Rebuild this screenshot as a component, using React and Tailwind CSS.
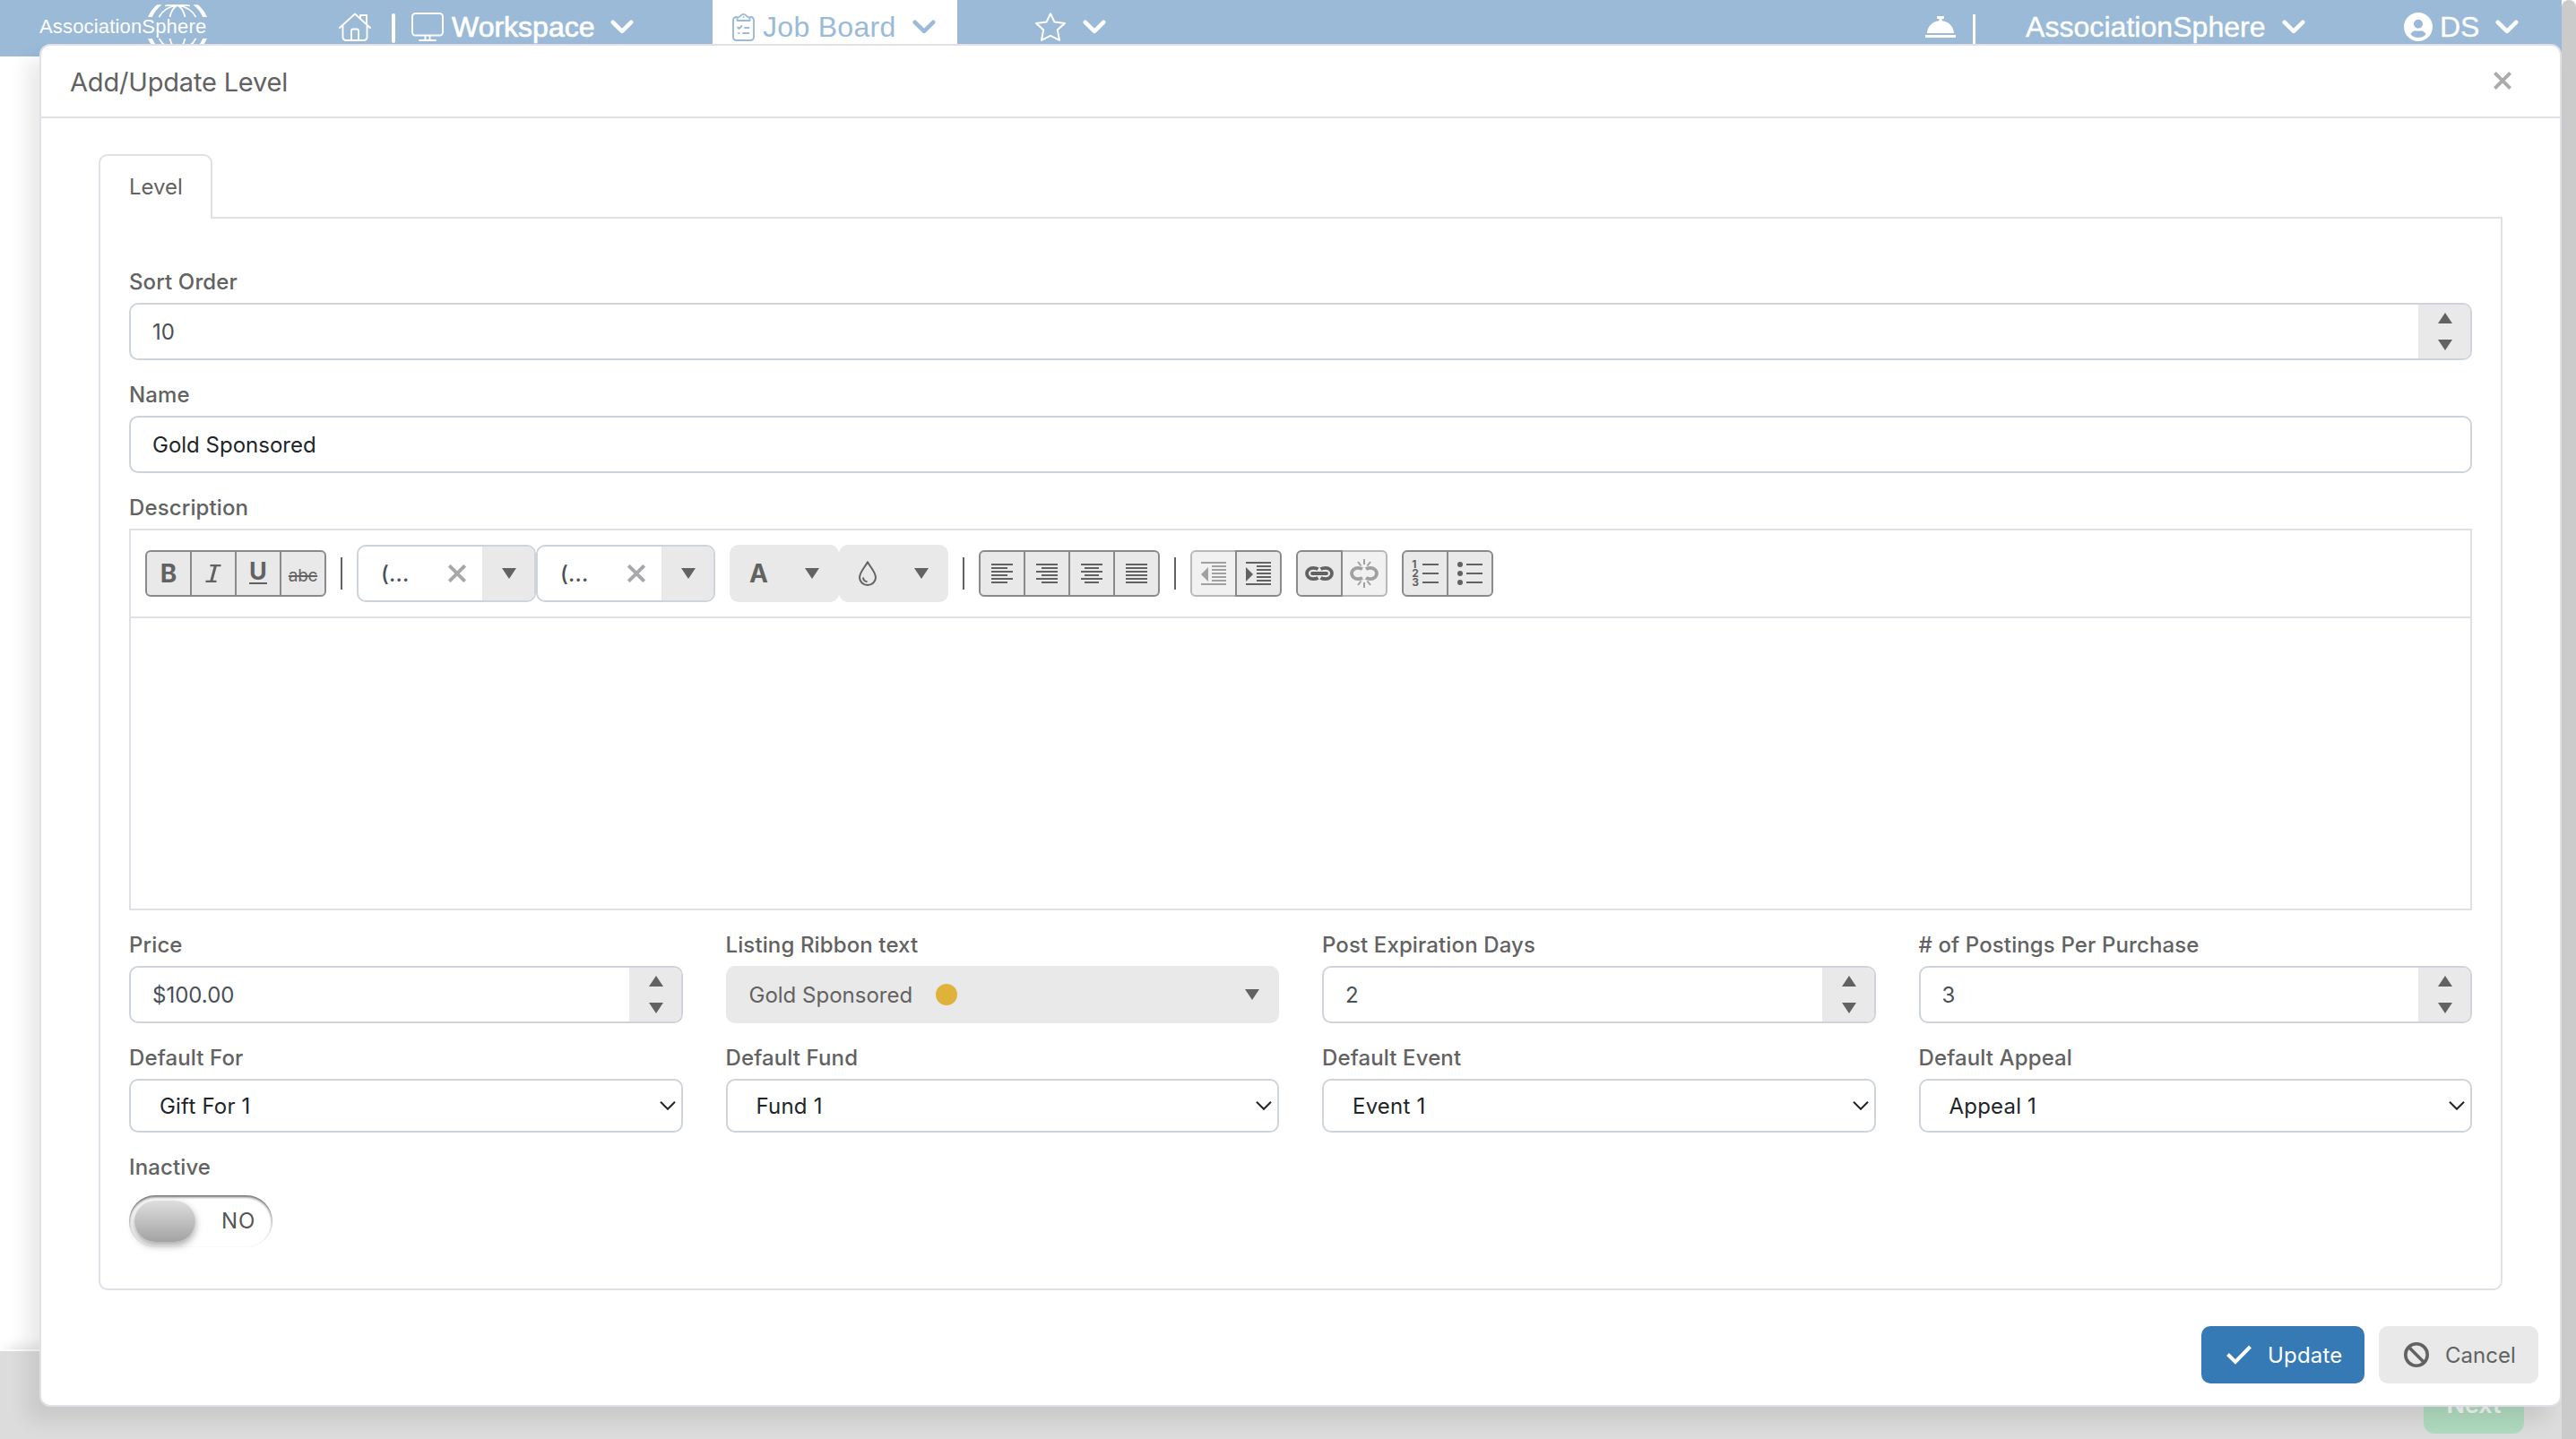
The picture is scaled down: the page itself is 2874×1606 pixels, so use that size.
import React from "react";

function Chevron({ className = "" }) {
  return (
    <svg viewBox="0 0 26 16" className={`h-4 w-[26px] shrink-0 ${className}`} fill="none" stroke="currentColor" strokeWidth="4.6" strokeLinecap="round" strokeLinejoin="round">
      <path d="M2.8 2.8 13 12.8 23.2 2.8" />
    </svg>
  );
}

function TriangleDown({ className = "" }) {
  return (
    <svg viewBox="0 0 16 12" className={`h-3 w-4 shrink-0 fill-[#626262] ${className}`}>
      <path d="M0 0h16L8 12z" />
    </svg>
  );
}

function TriangleUp() {
  return (
    <svg viewBox="0 0 16 12" className="h-3 w-4 shrink-0 fill-[#626262]">
      <path d="M0 12h16L8 0z" />
    </svg>
  );
}

function Logo() {
  return (
    <div className="relative ml-11 h-[60px] w-[188px] shrink-0 text-white">
      <svg viewBox="0 0 66 52" className="absolute top-[5px] left-[121px] h-[52px] w-[66px]" fill="none" stroke="currentColor" strokeWidth="1.7">
        <defs>
          <g id="cap">
            <path d="M0 14Q3.5 6 10 .3h5.500Q8 6.500 4.800 14zM66 14Q62.500 6 56 .3h-5.500Q58 6.500 61.200 14z" fill="currentColor" stroke="none" />
            <path d="M12.500 14Q18 3 33 .9Q48 3 53.500 14M24.500 14Q27 3.500 33 .9Q39 3.500 41.500 14M19 1.500Q33-.6 47 1.500" />
          </g>
        </defs>
        <use href="#cap" />
        <use href="#cap" transform="matrix(1 0 0 -1 0 52)" />
      </svg>
      <span className="absolute top-[17px] left-0 font-['Liberation_Sans',sans-serif] text-[22px] leading-[25px] tracking-[0.17px] whitespace-nowrap">AssociationSphere</span>
    </div>
  );
}

function Navbar() {
  return (
    <header className="flex h-[63px] items-start bg-[#9abad8] font-['Liberation_Sans',sans-serif] text-[32px] leading-none whitespace-nowrap text-white">
      <div className="flex h-[60px] items-center">
        <Logo />
        <svg viewBox="0 0 36 32" className="ml-[146px] h-8 w-9 shrink-0" fill="none" stroke="currentColor" strokeWidth="1.9" strokeLinecap="round" strokeLinejoin="round">
          <path d="M1 17 18 1.500 35 17M4.500 14v13.500a3.500 3.500 0 0 0 3.500 3.500h20a3.500 3.500 0 0 0 3.500-3.500V14M14 31V20.500a2 2 0 0 1 2-2h4a2 2 0 0 1 2 2V31M24 6.500V3h7v10" />
        </svg>
        <span className="mt-[3px] ml-[23px] h-[33px] w-1 shrink-0 rounded-sm bg-white" />
        <svg viewBox="0 0 36 32" className="ml-[18px] h-8 w-9 shrink-0" fill="none" stroke="currentColor" strokeWidth="1.900" strokeLinecap="round">
          <rect x="1" y="1" width="34" height="24.500" rx="3.500" />
          <path d="M15.500 26v4.500M20.500 26v4.500M9 31h18" />
        </svg>
        <span className="ml-[9px] w-40 shrink-0 [-webkit-text-stroke:0.7px]">Workspace</span>
        <Chevron className="ml-[17px]" />
      </div>
      <div className="ml-[88px] flex h-[63px] w-[273px] shrink-0 items-start bg-white text-[#9abad8]">
        <div className="flex h-[60px] items-center">
          <svg viewBox="0 0 25 32" className="ml-[22px] h-8 w-[25px] shrink-0" fill="none" stroke="currentColor" strokeWidth="1.900" strokeLinecap="round" strokeLinejoin="round">
            <path d="M5 5H4.500A3.500 3.500 0 0 0 1 8.500v19A3.500 3.500 0 0 0 4.500 31h16a3.500 3.500 0 0 0 3.500-3.500v-19A3.500 3.500 0 0 0 20.500 5H20" />
            <path d="M5.500 9V6l3.500-2a4 4 0 0 1 7 0l3.500 2v3zM12.500 5v.2M6 16.500l1.500 1.500 3-3M14 17h4.500M7 23h.5M12 23h6.500" strokeWidth="1.800" />
          </svg>
          <span className="ml-[9px] w-[150px] shrink-0 tracking-[0.3px]">Job Board</span>
          <Chevron className="ml-[17px]" />
        </div>
      </div>
      <div className="flex h-[60px] items-center">
        <svg viewBox="0 0 34 32" className="ml-[87px] h-8 w-[34px] shrink-0" fill="none" stroke="currentColor" strokeWidth="2" strokeLinejoin="round">
          <path d="M17 1.200 21.500 10.600 33 11.900 24.800 19.300 27 30.800 17 25.800 7 30.800 9.200 19.300 1 11.900 12.500 10.600z" />
        </svg>
        <Chevron className="ml-[19px]" />
        <svg viewBox="0 0 34 24" className="ml-[914px] h-6 w-[34px] shrink-0" fill="currentColor">
          <path d="M13 0h8v3h-2.300v2.200C26.500 6 31.500 11.500 32 19H2C2.500 11.500 7.500 6 15.300 5.200V3H13zM0 21h34v3H0z" />
        </svg>
        <span className="mt-[5px] ml-[19px] h-[33px] w-[3px] shrink-0 bg-white" />
        <span className="ml-[56px] w-[268px] shrink-0 tracking-[0.05px] [-webkit-text-stroke:0.4px]">AssociationSphere</span>
        <Chevron className="ml-[18px]" />
        <svg viewBox="0 0 32 32" className="ml-[110px] h-8 w-8 shrink-0">
          <path fill="currentColor" fillRule="evenodd" d="M16 0a16 16 0 1 0 0 32 16 16 0 0 0 0-32zM16 7.800a5 5 0 1 1 0 10 5 5 0 0 1 0-10zM7.500 24.500c.8-2.700 3-4.300 5.500-4.300 1.200.5 4.800.5 6 0 2.500 0 4.700 1.600 5.500 4.300-4.500 4.700-12.500 4.700-17 0z" />
        </svg>
        <span className="ml-[8px] w-[46px] shrink-0 [-webkit-text-stroke:0.3px]">DS</span>
        <Chevron className="ml-[16px]" />
      </div>
    </header>
  );
}

function Field({ label, children }) {
  return (
    <div className="flex flex-col">
      <label className="mb-[6px] h-9 leading-[38px] font-medium tracking-[0.12px] text-[#626262]">{label}</label>
      {children}
    </div>
  );
}

function Spinner({ value }) {
  return (
    <div className="flex h-16 overflow-hidden rounded-[10px] border-2 border-[#ced4da]">
      <div className="flex flex-1 items-center pt-[2px] pl-6 text-[#495057]">{value}</div>
      <div className="flex w-[58px] flex-col items-center justify-center gap-[18px] bg-[#e9e9e9] pl-[2px]">
        <TriangleUp />
        <TriangleDown />
      </div>
    </div>
  );
}

function Select({ value }) {
  return (
    <div className="flex h-[60px] items-center justify-between rounded-[10px] border-2 border-[#ced4da] pr-[6px] pl-8 text-[#212529]">
      <span className="pt-[2px] tracking-[0.2px]">{value}</span>
      <svg viewBox="0 0 18 10" className="h-[10px] w-[18px]" fill="none" stroke="currentColor" strokeWidth="2">
        <path d="M1 .8 9 8.800 17 .8" />
      </svg>
    </div>
  );
}

const BUTTON = "-ml-[2px] flex h-[52px] w-[52px] shrink-0 items-center justify-center border-2 border-[#8a8a8a] bg-[#e9e9e9] text-[#626262] first:ml-0 first:rounded-l-md last:rounded-r-md";

function ToolButton({ disabled, children }) {
  return <div className={disabled ? `${BUTTON} opacity-60` : `${BUTTON} relative`}>{children}</div>;
}

function Separator() {
  return <span className="mx-4 h-9 w-[2px] shrink-0 bg-[#626262]" />;
}

function Combo() {
  return (
    <div className="flex h-16 w-[200px] shrink-0 overflow-hidden rounded-[10px] border-2 border-[#ced4da] text-[#495057]">
      <div className="flex flex-1 items-center justify-between pr-[18px] pl-[25px]">
        <span className="pt-[2px] font-medium tracking-[0.2px]">(...</span>
        <svg viewBox="0 0 20 20" className="h-5 w-5" stroke="#a6a8ab" strokeWidth="4">
          <path d="M1.300 1.300l17.400 17.400M18.700 1.300 1.300 18.700" />
        </svg>
      </div>
      <div className="flex w-[58px] items-center justify-center bg-[#e9e9e9] pl-[2px]">
        <TriangleDown />
      </div>
    </div>
  );
}

function ColorButton({ children }) {
  return (
    <div className="flex h-16 w-[122px] shrink-0 items-center justify-between rounded-[10px] bg-[#e9e9e9] pr-[22px] pl-[22px] text-[#626262]">
      {children}
      <TriangleDown />
    </div>
  );
}

function Align({ lines }) {
  return (
    <svg viewBox="0 0 24 22" className="h-[22px] w-6 fill-current">
      {lines.map(([x, w], i) => (
        <rect key={i} x={x} y={i * 4} width={w} height="2" />
      ))}
    </svg>
  );
}

function IndentIcon({ arrow }) {
  return (
    <svg viewBox="0 0 28 26" className="h-[26px] w-7 fill-current">
      <path d="M0 0h28v2H0zM12 4h16v2H12zM12 8h16v2H12zM12 12h16v2H12zM12 16h16v2H12zM12 20h16v2H12zM0 24h28v2H0z" />
      <path d={arrow} />
    </svg>
  );
}

const alternate = (x, w) => [0, 1, 2, 3, 4, 5].map((i) => (i % 2 ? [x, w] : [0, 24]));

function Toolbar() {
  return (
    <div className="flex h-24 items-center border-b-2 border-[#e0e0e6] pl-4 box-content">
      <div className="flex">
        <ToolButton><span className="text-[28px] leading-none font-bold">B</span></ToolButton>
        <ToolButton>
          <svg viewBox="0 0 18 20" className="h-5 w-[18px]" fill="none" stroke="currentColor" strokeWidth="2.300">
            <path d="M5.500 1.200H17.500M.5 18.800H12.500" />
            <path d="M11.500 1 6.700 19" strokeWidth="3" />
          </svg>
        </ToolButton>
        <ToolButton>
          <span className="mb-[2px] border-b-2 border-[#626262] text-[27px] leading-[23px] font-bold">
            <span className="relative -top-px">U</span>
          </span>
        </ToolButton>
        <ToolButton><span className="mt-[5px] text-[19px] leading-none tracking-[-0.3px] line-through decoration-2">abc</span></ToolButton>
      </div>
      <Separator />
      <Combo />
      <Combo />
      <div className="ml-4 flex">
        <ColorButton><span className="text-[28px] leading-none font-bold">A</span></ColorButton>
        <ColorButton>
          <svg viewBox="0 0 20 28" className="h-7 w-5" fill="none" stroke="currentColor" strokeWidth="2" strokeLinejoin="round">
            <path d="M10 1.200C7 7 1 12.500 1 18.500a9 8.500 0 0 0 18 0C19 12.500 13 7 10 1.200z" />
            <path d="M5 18.500c.2 2.700 2 4.400 4.600 4.700" />
          </svg>
        </ColorButton>
      </div>
      <Separator />
      <div className="flex">
        <ToolButton><Align lines={alternate(0, 18)} /></ToolButton>
        <ToolButton><Align lines={alternate(6, 18)} /></ToolButton>
        <ToolButton><Align lines={alternate(4, 16)} /></ToolButton>
        <ToolButton><Align lines={alternate(0, 24)} /></ToolButton>
      </div>
      <Separator />
      <div className="flex">
        <ToolButton disabled><IndentIcon arrow="M8 6v16L0 14z" /></ToolButton>
        <ToolButton><IndentIcon arrow="M0 6v16l8-8z" /></ToolButton>
      </div>
      <div className="ml-4 flex">
        <ToolButton>
          <svg viewBox="0 0 32 16" className="h-4 w-8 shrink-0" fill="none" stroke="currentColor" strokeWidth="3.800">
            <path d="M14.500 3.200C13 2.200 11.500 1.900 9 1.900a7 6.100 0 0 0 0 12.200c2.500 0 4-.3 5.500-1.300M17.500 3.200C19 2.200 20.500 1.900 23 1.900a7 6.100 0 0 1 0 12.200c-2.500 0-4-.3-5.500-1.300" />
            <path d="M8 8h16" strokeLinecap="round" />
          </svg>
        </ToolButton>
        <ToolButton disabled>
          <svg viewBox="0 0 32 32" className="h-8 w-8 shrink-0" fill="none" stroke="currentColor" strokeWidth="3.800">
            <path d="M14 11.200C12.500 10.200 11 9.900 9 9.900a7 6.100 0 0 0 0 12.200c2 0 3.500-.3 5-1.300M18 11.200c1.500-1 3-1.300 5-1.300a7 6.100 0 0 1 0 12.200c-2 0-3.500-.3-5-1.300" />
            <path d="M16 0v6M16 26v6M9 3l3.500 4.500M23 3l-3.500 4.500M9 29l3.500-4.500M23 29l-3.500-4.500" strokeWidth="2" />
          </svg>
        </ToolButton>
      </div>
      <div className="ml-4 flex">
        <ToolButton>
          <div className="flex items-center gap-[4px]">
            <div className="flex flex-col text-[12px] leading-[10px] font-bold">
              <span>1</span>
              <span>2</span>
              <span>3</span>
            </div>
            <div className="flex flex-col gap-2">
              <span className="h-[2px] w-[18px] bg-[#626262]" />
              <span className="h-[2px] w-[18px] bg-[#626262]" />
              <span className="h-[2px] w-[18px] bg-[#626262]" />
            </div>
          </div>
        </ToolButton>
        <ToolButton>
          <svg viewBox="0 0 28 26" className="h-[26px] w-7 fill-current">
            <circle cx="3" cy="3" r="3" />
            <circle cx="3" cy="13" r="3" />
            <circle cx="3" cy="23" r="3" />
            <path d="M10 2h18v2H10zM10 12h18v2H10zM10 22h18v2H10z" />
          </svg>
        </ToolButton>
      </div>
    </div>
  );
}

function Switch() {
  return (
    <div className="mt-2 flex h-[58px] w-40 items-center rounded-full pl-[6px] text-[#555] shadow-[inset_0_2px_3px_0_rgba(0,0,0,0.6)]">
      <span className="h-[46px] w-[68px] rounded-full bg-gradient-to-b from-[#dedede] to-[#a3a3a3] shadow-[0_4px_8px_rgba(0,0,0,0.35)]" />
      <span className="ml-[29px] tracking-[0.8px]">NO</span>
    </div>
  );
}

function Modal() {
  return (
    <div className="absolute top-[49px] left-11 flex h-[1521px] w-[2814px] flex-col rounded-[12px] border-2 border-[#e0e0e6] bg-white shadow-[-14px_16px_22px_rgba(0,0,0,0.085)]">
      <div className="flex h-[81px] items-center justify-between border-b-2 border-[#e0e0e6] pr-[54px] pl-8 pb-px">
        <h1 className="pt-[2px] text-[29px] leading-none tracking-[-0.18px] text-[#626262]">Add/Update Level</h1>
        <svg viewBox="0 0 20 20" className="h-5 w-5" stroke="#ababab" strokeWidth="4">
          <path d="M1.400 1.400l17.200 17.200M18.600 1.400 1.400 18.600" />
        </svg>
      </div>
      <div className="px-16 pt-10">
        <div className="relative z-10 -mb-[2px] flex h-[72px] w-[127px] items-center rounded-t-[10px] border-2 border-b-0 border-[#e0e0e6] bg-white pl-8 text-[#626262]">Level</div>
        <div className="flex h-[1198px] flex-col gap-5 rounded-b-[10px] border-2 border-[#e0e0e6] px-8 pt-[52px]">
          <Field label="Sort Order"><Spinner value="10" /></Field>
          <Field label="Name">
            <div className="flex h-16 items-center rounded-[10px] border-2 border-[#ced4da] pt-[2px] pl-6 text-[#212529]">Gold Sponsored</div>
          </Field>
          <Field label="Description">
            <div className="h-[426px] border-2 border-[#e0e0e6]">
              <Toolbar />
            </div>
          </Field>
          <div className="grid grid-cols-4 gap-x-12 gap-y-5">
            <Field label="Price"><Spinner value="$100.00" /></Field>
            <Field label="Listing Ribbon text">
              <div className="flex h-16 items-center rounded-[10px] bg-[#e9e9e9] pr-[22px] pl-[26px] text-[#626262]">
                <span className="pt-[2px]">Gold Sponsored</span>
                <span className="ml-[26px] h-6 w-6 rounded-full bg-[#dfb33b]" />
                <TriangleDown className="ml-auto" />
              </div>
            </Field>
            <Field label="Post Expiration Days"><Spinner value="2" /></Field>
            <Field label="# of Postings Per Purchase"><Spinner value="3" /></Field>
            <Field label="Default For"><Select value="Gift For 1" /></Field>
            <Field label="Default Fund"><Select value="Fund 1" /></Field>
            <Field label="Default Event"><Select value="Event 1" /></Field>
            <Field label="Default Appeal"><Select value="Appeal 1" /></Field>
          </div>
          <Field label="Inactive"><Switch /></Field>
        </div>
      </div>
      <div className="mt-10 flex justify-end gap-4 pr-6">
        <div className="flex h-16 w-[182px] items-center rounded-[10px] bg-[#357ab4] pl-7 tracking-[0.2px] text-white">
          <svg viewBox="0 0 28 22" className="h-[22px] w-7" fill="none" stroke="currentColor" strokeWidth="4">
            <path d="M1.500 10.500 10 19 26.500 2" />
          </svg>
          <span className="ml-[18px] pt-[2px]">Update</span>
        </div>
        <div className="flex h-16 w-[178px] items-center rounded-[10px] bg-[#e9e9e9] pl-7 text-[#626262]">
          <svg viewBox="0 0 28 28" className="h-7 w-7" fill="none" stroke="currentColor" strokeWidth="3.600">
            <circle cx="14" cy="14" r="12.200" />
            <path d="M5.500 5.500l17 17" />
          </svg>
          <span className="ml-[18px] pt-[2px]">Cancel</span>
        </div>
      </div>
    </div>
  );
}

export default function App() {
  return (
    <div className="relative flex h-[1606px] w-[2874px] overflow-hidden bg-white font-[Inter,sans-serif] text-[24px]">
      <div className="flex w-[2858px] flex-col">
        <Navbar />
        <div className="flex-1" />
        <footer className="flex h-[98px] items-start justify-end bg-[#dcdcdc] pr-[42px] shadow-[0_-2px_0_#fbfbfb,8px_-6px_12px_rgba(0,0,0,0.1)]">
          <div className="mt-[28px] flex h-16 w-[112px] items-center justify-center rounded-xl bg-[#b0dbbf] text-[27px] font-semibold text-[#f3f3f3]">Next</div>
        </footer>
      </div>
      <div className="w-4 bg-white">
        <div className="h-full rounded-t-full bg-[#cbcbcb]" />
      </div>
      <Modal />
    </div>
  );
}
